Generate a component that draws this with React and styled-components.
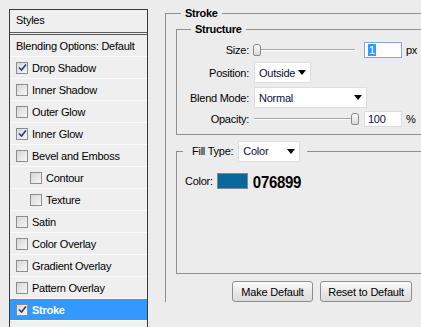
import React from "react";
import styled, { createGlobalStyle } from "styled-components";

const Global = createGlobalStyle`
  html, body { margin: 0; padding: 0; background: #ececec; }
  body { font-family: "Liberation Sans", Arial, sans-serif; font-size: 11px; letter-spacing: -0.25px; color: #000; }
  * { box-sizing: border-box; }
`;

const Page = styled.div`
  display: flex;
  align-items: flex-start;
  width: 421px;
  height: 327px;
  overflow: hidden;
  background: #ececec;
`;

const StylesPanel = styled.div`
  margin: 9px 0 0 9px;
  width: 139px;
  flex: none;
  height: 330px;
  border: 1px solid #3a3a3a;
  border-bottom: none;
  background: #efefef;
  display: flex;
  flex-direction: column;
`;

const Header = styled.div`
  height: 25px;
  padding: 0 0 3px 6px;
  display: flex;
  align-items: center;
  border-bottom: 3px double #5a5a5a;
`;

const Row = styled.div`
  height: 22px;
  flex: none;
  display: flex;
  align-items: center;
  gap: 4px;
  padding-left: ${(p) => (p.$indent ? 20 : 6)}px;
  border-bottom: 1px solid #fbfbfb;
  background: ${(p) => (p.$active ? "#3399ff" : "transparent")};
  color: ${(p) => (p.$active ? "#fff" : "#000")};
  font-weight: ${(p) => (p.$active ? "bold" : "normal")};
  white-space: nowrap;
`;

const Box = styled.span`
  width: 12px;
  height: 12px;
  flex: none;
  border: 1px solid #8d8d8d;
  background: linear-gradient(135deg, #d6d6d6, #f7f7f7);
  display: flex;
  align-items: center;
  justify-content: center;
`;

const Check = ({ on }) => (
  <Box>
    {on && (
      <svg width="9" height="9" viewBox="0 0 9 9">
        <path d="M1 4.5 L3.5 7 L8 1.5" fill="none" stroke="#2b3a8c" strokeWidth="1.6" />
      </svg>
    )}
  </Box>
);

const Right = styled.div`
  flex: 1;
  margin-left: 17px;
  min-width: 0;
`;

const Group = styled.fieldset`
  margin: ${(p) => p.$mt || 0}px 0 0 0;
  padding: 0 0 0 ${(p) => p.$pl || 0}px;
  min-width: 0;
  border: 1px solid #8f8f8f;
  border-right: none;
  border-bottom: ${(p) => (p.$open ? "none" : "1px solid #8f8f8f")};
  height: ${(p) => (p.$h ? p.$h + "px" : "auto")};
`;

const Legend = styled.legend`
  margin-left: ${(p) => p.$ml || 0}px;
  padding: 0 ${(p) => p.$pr || 4}px 0 ${(p) => p.$pl || 4}px;
  font-weight: ${(p) => (p.$plain ? "normal" : "bold")};
  line-height: 13px;
  display: flex;
  align-items: center;
  gap: 5px;
`;

const FieldRow = styled.div`
  display: flex;
  align-items: center;
  height: ${(p) => p.$h}px;
  margin-top: ${(p) => p.$mt}px;
`;

const Label = styled.span`
  width: 72px;
  text-align: right;
  margin-right: 5px;
  flex: none;
`;

const Slider = styled.div`
  width: 101px;
  height: 12px;
  position: relative;
  margin-right: 9px;
  flex: none;
  &::before {
    content: "";
    position: absolute;
    left: 0;
    right: 0;
    top: 5px;
    height: 1px;
    background: #a5a5a5;
    box-shadow: 0 1px 0 #fff;
  }
`;

const Thumb = styled.span`
  position: absolute;
  top: 0;
  width: 8px;
  height: 12px;
  border: 1px solid #8a8a8a;
  border-radius: 3px 3px 2px 2px;
  background: linear-gradient(#fbfbfb, #d9d9d9);
`;

const Input = styled.div`
  width: 38px;
  height: 16px;
  background: #fff;
  border: 1px solid ${(p) => (p.$focus ? "#86a9d3" : "#dcdcdc")};
  padding-left: 3px;
  display: flex;
  align-items: center;
  color: #10104a;
  flex: none;
`;

const Sel = styled.span`
  background: #3399ff;
  color: #fff;
  padding: 0 1px;
  line-height: 12px;
`;

const Unit = styled.span`
  margin-left: 4px;
`;

const Select = styled.div`
  width: ${(p) => p.$w}px;
  height: 21px;
  background: #fff;
  border: 1px solid #dedede;
  display: flex;
  align-items: center;
  justify-content: space-between;
  padding: 0 4px 0 4px;
  color: #0d0d3c;
  font-weight: normal;
  flex: none;
`;

const Arrow = () => (
  <svg width="8" height="5" viewBox="0 0 8 5">
    <path d="M0 0 H8 L4 5 Z" fill="#000" />
  </svg>
);

const ColorRow = styled.div`
  display: flex;
  align-items: center;
  margin: 11px 0 0 8px;
  height: 16px;
`;

const Swatch = styled.div`
  width: 31px;
  height: 16px;
  margin: 0 5px 0 4px;
  background: #076899;
  border: 1px solid #7d8c96;
`;

const Hex = styled.span`
  font-weight: bold;
  font-size: 15px;
  letter-spacing: -0.3px;
  transform: scaleY(1.1);
`;

const Buttons = styled.div`
  display: flex;
  gap: 7px;
  margin: 7px 0 0 56px;
`;

const Button = styled.button`
  width: ${(p) => p.$w}px;
  height: 21px;
  font-family: "Liberation Sans", Arial, sans-serif;
  font-size: 11px;
  letter-spacing: -0.2px;
  color: #000;
  border: 1px solid #8e8e8e;
  border-radius: 3px;
  background: linear-gradient(#fdfdfd, #e9e9e9 50%, #dcdcdc);
  padding: 0;
`;

const items = [
  ["Drop Shadow", true],
  ["Inner Shadow", false],
  ["Outer Glow", false],
  ["Inner Glow", true],
  ["Bevel and Emboss", false],
  ["Contour", false, true],
  ["Texture", false, true],
  ["Satin", false],
  ["Color Overlay", false],
  ["Gradient Overlay", false],
  ["Pattern Overlay", false],
  ["Stroke", true, false, true],
];

export default function App() {
  return (
    <Page>
      <Global />
      <StylesPanel>
        <Header>Styles</Header>
        <Row>Blending Options: Default</Row>
        {items.map(([name, on, indent, active]) => (
          <Row key={name} $indent={indent} $active={active}>
            <Check on={on} />
            {name}
          </Row>
        ))}
      </StylesPanel>
      <Right>
        <Group $mt={7} $pl={10} $open>
          <Legend $ml={5} $pl={4} $pr={4}>Stroke</Legend>
          <Group $mt={3}>
            <Legend $ml={14} $pl={4} $pr={4}>Structure</Legend>
            <FieldRow $h={17} $mt={5}>
              <Label>Size:</Label>
              <Slider>
                <Thumb style={{ left: "-1px" }} />
              </Slider>
              <Input $focus>
                <Sel>1</Sel>
              </Input>
              <Unit>px</Unit>
            </FieldRow>
            <FieldRow $h={21} $mt={4}>
              <Label>Position:</Label>
              <Select $w={57}>
                Outside
                <Arrow />
              </Select>
            </FieldRow>
            <FieldRow $h={21} $mt={4}>
              <Label>Blend Mode:</Label>
              <Select $w={113}>
                Normal
                <Arrow />
              </Select>
            </FieldRow>
            <FieldRow $h={17} $mt={2}>
              <Label>Opacity:</Label>
              <Slider>
                <Thumb style={{ left: "97px" }} />
              </Slider>
              <Input>100</Input>
              <Unit>%</Unit>
            </FieldRow>
            <FieldRow $h={7} $mt={0} />
          </Group>
          <Group $mt={6} $h={133}>
            <Legend $ml={6} $pl={9} $pr={7} $plain>
              Fill Type:
              <Select $w={62}>
                Color
                <Arrow />
              </Select>
            </Legend>
            <ColorRow>
              Color:
              <Swatch />
              <Hex>076899</Hex>
            </ColorRow>
          </Group>
          <Buttons>
            <Button $w={81}>Make Default</Button>
            <Button $w={92}>Reset to Default</Button>
          </Buttons>
        </Group>
      </Right>
    </Page>
  );
}
